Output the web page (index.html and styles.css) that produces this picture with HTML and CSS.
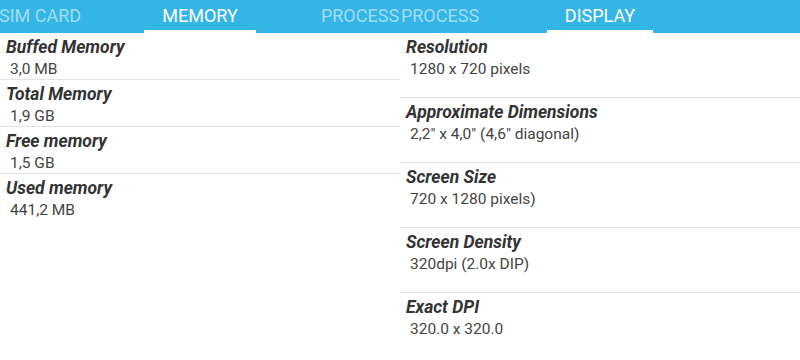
FILE: index.html
```html
<!DOCTYPE html>
<html lang="en">
<head>
    <meta charset="UTF-8">
    <meta name="viewport" content="width=device-width, initial-scale=1.0">
    <title>Device Info</title>
    <link rel="stylesheet" href="styles.css">
</head>
<body>
    <div class="screens">
        <!-- Memory screen -->
        <div class="screen">
            <div class="tabs">
                <div class="tab"><span class="tab-label">SIM CARD</span></div>
                <div class="tab active"><span class="tab-label">MEMORY</span></div>
                <div class="tab"><span class="tab-label">PROCESS</span></div>
            </div>
            <ul class="info-list">
                <li class="info-item">
                    <span class="info-title">Buffed Memory</span>
                    <span class="info-value">3,0 MB</span>
                </li>
                <li class="info-item">
                    <span class="info-title">Total Memory</span>
                    <span class="info-value">1,9 GB</span>
                </li>
                <li class="info-item">
                    <span class="info-title">Free memory</span>
                    <span class="info-value">1,5 GB</span>
                </li>
                <li class="info-item last">
                    <span class="info-title">Used memory</span>
                    <span class="info-value">441,2 MB</span>
                </li>
            </ul>
        </div>

        <!-- Display screen -->
        <div class="screen">
            <div class="tabs">
                <div class="tab"><span class="tab-label">PROCESS</span></div>
                <div class="tab active"><span class="tab-label">DISPLAY</span></div>
            </div>
            <ul class="info-list tall">
                <li class="info-item">
                    <span class="info-title">Resolution</span>
                    <span class="info-value">1280 x 720 pixels</span>
                </li>
                <li class="info-item">
                    <span class="info-title">Approximate Dimensions</span>
                    <span class="info-value">2,2" x 4,0" (4,6" diagonal)</span>
                </li>
                <li class="info-item">
                    <span class="info-title">Screen Size</span>
                    <span class="info-value">720 x 1280 pixels)</span>
                </li>
                <li class="info-item">
                    <span class="info-title">Screen Density</span>
                    <span class="info-value">320dpi (2.0x DIP)</span>
                </li>
                <li class="info-item last">
                    <span class="info-title">Exact DPI</span>
                    <span class="info-value">320.0 x 320.0</span>
                </li>
            </ul>
        </div>
    </div>
</body>
</html>
```

FILE: styles.css
```css
/* CSS styles */
body {
    font-family: Roboto, 'Liberation Sans', sans-serif;
    margin: 0;
    padding: 0;
    background-color: #fff;
}
.screens {
    display: flex;
    width: 800px;
    height: 360px;
    overflow: hidden;
}
.screen {
    width: 400px;
    overflow: hidden;
}
.tabs {
    display: flex;
    height: 33px;
    margin-left: -40px;
    width: 480px;
    background-color: #33b5e5;
}
.tab {
    flex: 0 0 160px;
    display: flex;
    justify-content: center;
    height: 33px;
}
.tab-label {
    display: block;
    padding: 0 18px;
    box-sizing: border-box;
    height: 33px;
    line-height: 32px;
    font-size: 18px;
    color: rgba(255, 255, 255, 0.55);
    white-space: nowrap;
}
.tab.active .tab-label {
    color: #fff;
    border-bottom: 3px solid #fff;
}
.info-list {
    list-style: none;
    padding: 0;
    margin: 0;
}
.info-item {
    display: flex;
    flex-direction: column;
    padding: 4px 0 1px 6px;
    border-bottom: 1px solid #e3e3e3;
}
.info-list.tall .info-item {
    padding-bottom: 19px;
}
.info-item.last {
    border-bottom: none;
}
.info-title {
    font-size: 17.5px;
    line-height: 20px;
    font-weight: bold;
    font-style: italic;
    color: #333;
}
.info-value {
    margin-top: 3px;
    padding-left: 4px;
    font-size: 15.5px;
    line-height: 18px;
    color: #444;
}
```
